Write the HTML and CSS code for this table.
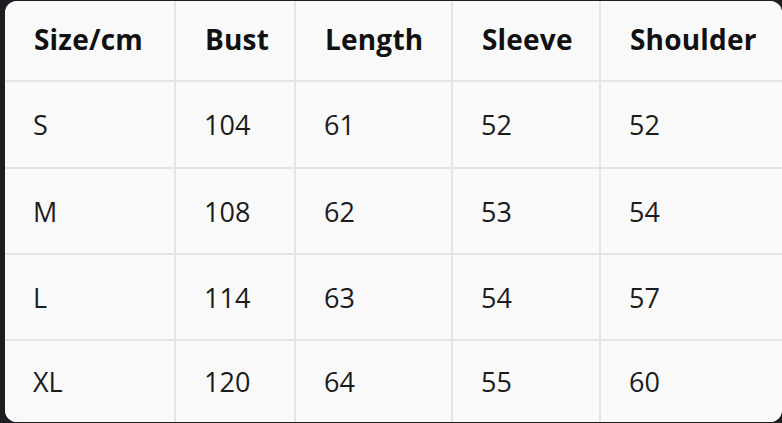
FILE: index.html
```html
<!DOCTYPE html>
<html lang="en">
<head>
<meta charset="utf-8">
<title>Size chart</title>
<link rel="stylesheet" href="styles.css">
</head>
<body>
<div class="card">
  <div class="grid">
    <div class="cell head">Size/cm</div>
    <div class="cell head">Bust</div>
    <div class="cell head">Length</div>
    <div class="cell head">Sleeve</div>
    <div class="cell head">Shoulder</div>

    <div class="cell">S</div>
    <div class="cell">104</div>
    <div class="cell">61</div>
    <div class="cell">52</div>
    <div class="cell">52</div>

    <div class="cell">M</div>
    <div class="cell">108</div>
    <div class="cell">62</div>
    <div class="cell">53</div>
    <div class="cell">54</div>

    <div class="cell">L</div>
    <div class="cell">114</div>
    <div class="cell">63</div>
    <div class="cell">54</div>
    <div class="cell">57</div>

    <div class="cell">XL</div>
    <div class="cell">120</div>
    <div class="cell">64</div>
    <div class="cell">55</div>
    <div class="cell">60</div>
  </div>
</div>
</body>
</html>
```
FILE: styles.css
```css
html, body {
  margin: 0;
  padding: 0;
  background: #1d1e22;
  width: 782px;
  height: 423px;
  overflow: hidden;
}

.card {
  margin: 1px 0 0 5px;
  width: 777px;
  height: 421px;
  border-radius: 12px;
  overflow: hidden;
  background: #f9f9f9;
}

.grid {
  display: grid;
  grid-template-columns: 169px 118px 155px 146px 181px;
  grid-template-rows: 79px 85px 84px 84px 81px;
  gap: 2px;
  background: #e4e4e4;
  width: 100%;
  height: 100%;
}

.cell {
  background: #f9f9f9;
  display: flex;
  align-items: center;
  padding-left: 28px;
  font-family: "Open Sans", "Liberation Sans", sans-serif;
  font-size: 27px;
  color: #1c1c1c;
  line-height: 1;
}

.cell.head {
  font-weight: 700;
  font-size: 28px;
  letter-spacing: 0.2px;
  color: #111;
  padding-left: 29px;
  padding-bottom: 4px;
}
```
